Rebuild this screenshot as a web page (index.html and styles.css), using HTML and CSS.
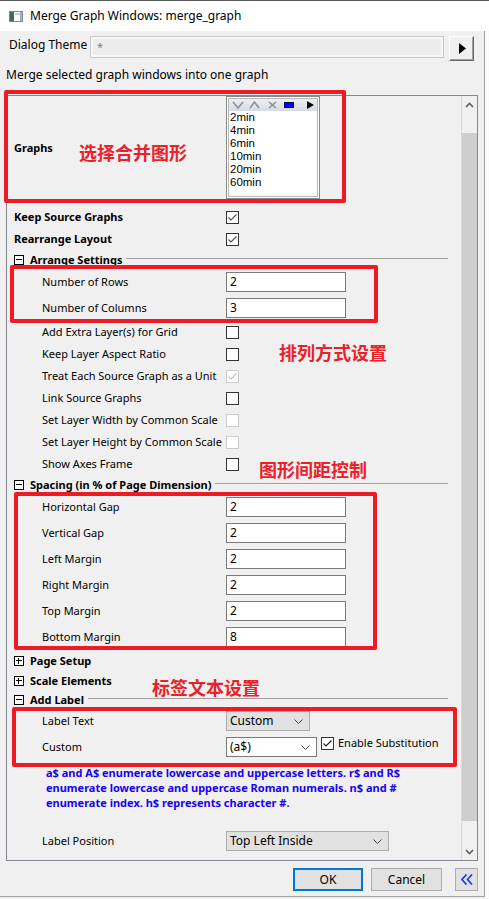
FILE: index.html
```html
<!DOCTYPE html>
<html>
<head>
<meta charset="utf-8">
<title>Merge Graph Windows</title>
<link rel="stylesheet" href="styles.css">
</head>
<body>
<div class="titlebar">
  <svg class="app-icon" width="14" height="11" viewBox="0 0 14 11">
    <rect x="0.5" y="0.5" width="13" height="10" fill="#fff" stroke="#7d8a8a"/>
    <rect x="1" y="1" width="4" height="9" fill="#3f6b66"/>
    <rect x="6" y="2" width="5" height="2" fill="#c9d3d3"/>
    <rect x="11" y="1" width="2" height="9" fill="#a8b2b2"/>
  </svg>
  <span class="title">Merge Graph Windows: merge_graph</span>
</div>
<div class="frame">
  <div class="dialog">
    <div class="theme-row">
      <span class="theme-label">Dialog Theme</span>
      <div class="theme-box">*</div>
      <div class="theme-btn">
        <svg width="7" height="11" viewBox="0 0 7 11"><polygon points="0,0 7,5.5 0,11" fill="#000"/></svg>
      </div>
    </div>
    <div class="desc">Merge selected graph windows into one graph</div>
    <div class="panel">
      <div class="tree">
        <div class="row graphs">
          <div class="lbl b">Graphs</div>
          <div class="listbox">
            <div class="lb-tools">
              <svg width="90" height="12" viewBox="0 0 90 12">
                <polyline points="4,3 9,9 14,3" fill="none" stroke="#8b9099" stroke-width="1.6"/>
                <polyline points="21,9 25.5,3 30,9" fill="none" stroke="#8b9099" stroke-width="1.6"/>
                <path d="M40,3 L47,9 M47,3 L40,9" stroke="#8b9099" stroke-width="1.6"/>
                <rect x="55.5" y="3.5" width="9" height="5" fill="#0000ff" stroke="#00006a"/>
                <polygon points="78,2 85,6 78,10" fill="#000"/>
              </svg>
            </div>
            <div class="lb-item">2min</div>
            <div class="lb-item">4min</div>
            <div class="lb-item">6min</div>
            <div class="lb-item">10min</div>
            <div class="lb-item">20min</div>
            <div class="lb-item">60min</div>
          </div>
        </div>
        <div class="spacer7"></div>
        <div class="row">
          <div class="lbl b">Keep Source Graphs</div>
          <div class="cb"><svg width="11" height="11" viewBox="0 0 11 11"><polyline points="1.5,5.5 4,8 9.5,2.5" fill="none" stroke="#555" stroke-width="1.2"/></svg></div>
        </div>
        <div class="row">
          <div class="lbl b">Rearrange Layout</div>
          <div class="cb"><svg width="11" height="11" viewBox="0 0 11 11"><polyline points="1.5,5.5 4,8 9.5,2.5" fill="none" stroke="#555" stroke-width="1.2"/></svg></div>
        </div>
        <div class="hdr">
          <span class="exp"><span class="bar-h"></span></span>
          <span class="htext">Arrange Settings</span>
          <span class="hline"></span>
        </div>
        <div class="row r26">
          <div class="lbl sub">Number of Rows</div>
          <div class="num">2</div>
        </div>
        <div class="row r26">
          <div class="lbl sub">Number of Columns</div>
          <div class="num">3</div>
        </div>
        <div class="row">
          <div class="lbl sub">Add Extra Layer(s) for Grid</div>
          <div class="cb"></div>
        </div>
        <div class="row">
          <div class="lbl sub">Keep Layer Aspect Ratio</div>
          <div class="cb"></div>
        </div>
        <div class="row">
          <div class="lbl sub">Treat Each Source Graph as a Unit</div>
          <div class="cb dis"><svg width="11" height="11" viewBox="0 0 11 11"><polyline points="1.5,5.5 4,8 9.5,2.5" fill="none" stroke="#c4c4c4" stroke-width="1.2"/></svg></div>
        </div>
        <div class="row">
          <div class="lbl sub">Link Source Graphs</div>
          <div class="cb"></div>
        </div>
        <div class="row">
          <div class="lbl sub">Set Layer Width by Common Scale</div>
          <div class="cb dis"></div>
        </div>
        <div class="row">
          <div class="lbl sub">Set Layer Height by Common Scale</div>
          <div class="cb dis"></div>
        </div>
        <div class="row">
          <div class="lbl sub">Show Axes Frame</div>
          <div class="cb"></div>
        </div>
        <div class="hdr">
          <span class="exp"><span class="bar-h"></span></span>
          <span class="htext">Spacing (in % of Page Dimension)</span>
          <span class="hline"></span>
        </div>
        <div class="row r26"><div class="lbl sub">Horizontal Gap</div><div class="num">2</div></div>
        <div class="row r26"><div class="lbl sub">Vertical Gap</div><div class="num">2</div></div>
        <div class="row r26"><div class="lbl sub">Left Margin</div><div class="num">2</div></div>
        <div class="row r26"><div class="lbl sub">Right Margin</div><div class="num">2</div></div>
        <div class="row r26"><div class="lbl sub">Top Margin</div><div class="num">2</div></div>
        <div class="row r26"><div class="lbl sub">Bottom Margin</div><div class="num">8</div></div>
        <div class="hdr h21">
          <span class="exp"><span class="bar-h"></span><span class="bar-v"></span></span>
          <span class="htext">Page Setup</span>
        </div>
        <div class="hdr">
          <span class="exp"><span class="bar-h"></span><span class="bar-v"></span></span>
          <span class="htext">Scale Elements</span>
        </div>
        <div class="hdr">
          <span class="exp"><span class="bar-h"></span></span>
          <span class="htext">Add Label</span>
          <span class="hline"></span>
        </div>
        <div class="row r24">
          <div class="lbl sub">Label Text</div>
          <div class="combo gray w84"><span>Custom</span><svg width="9" height="5" viewBox="0 0 9 5"><polyline points="0.5,0.5 4.5,4.5 8.5,0.5" fill="none" stroke="#444"/></svg></div>
        </div>
        <div class="row r28">
          <div class="lbl sub">Custom</div>
          <div class="combo white w91"><span>(a$)</span><svg width="9" height="5" viewBox="0 0 9 5"><polyline points="0.5,0.5 4.5,4.5 8.5,0.5" fill="none" stroke="#444"/></svg></div>
          <div class="cb top"><svg width="11" height="11" viewBox="0 0 11 11"><polyline points="1.5,5.5 4,8 9.5,2.5" fill="none" stroke="#222" stroke-width="1.2"/></svg></div>
          <span class="cbtext">Enable Substitution</span>
        </div>
        <div class="note">a$ and A$ enumerate lowercase and uppercase letters. r$ and R$<br>enumerate lowercase and uppercase Roman numerals. n$ and #<br>enumerate index. h$ represents character #.</div>
        <div class="row lastrow">
          <div class="lbl sub">Label Position</div>
          <div class="combo gray w163"><span>Top Left Inside</span><svg width="9" height="5" viewBox="0 0 9 5"><polyline points="0.5,0.5 4.5,4.5 8.5,0.5" fill="none" stroke="#444"/></svg></div>
        </div>
      </div>
      <div class="vscroll">
        <div class="sc-arrow">
          <svg width="9" height="6" viewBox="0 0 9 6"><polyline points="1,5 4.5,1.5 8,5" fill="none" stroke="#606060" stroke-width="1.6"/></svg>
        </div>
        <div class="sc-track"><div class="sc-thumb"></div></div>
        <div class="sc-arrow">
          <svg width="9" height="6" viewBox="0 0 9 6"><polyline points="1,1 4.5,4.5 8,1" fill="none" stroke="#606060" stroke-width="1.6"/></svg>
        </div>
      </div>
    </div>
    <div class="footer">
      <div class="btn ok">OK</div>
      <div class="btn cancel">Cancel</div>
      <div class="btn more">
        <svg width="12" height="11" viewBox="0 0 12 11"><polyline points="5.5,0.5 1,5.5 5.5,10.5" fill="none" stroke="#1d3cf0" stroke-width="1.8"/><polyline points="11,0.5 6.5,5.5 11,10.5" fill="none" stroke="#1d3cf0" stroke-width="1.8"/></svg>
      </div>
    </div>
  </div>
  <div class="side"></div>
</div>

<div class="mark m1"></div>
<div class="mark m2"></div>
<div class="mark m3"></div>
<div class="mark m4"></div>
<div class="note-cn n1">选择合并图形</div>
<div class="note-cn n2">排列方式设置</div>
<div class="note-cn n3">图形间距控制</div>
<div class="note-cn n4">标签文本设置</div>
</body>
</html>
```
FILE: styles.css
```css
html, body {
  margin: 0;
  padding: 0;
}
body {
  width: 489px;
  height: 899px;
  overflow: hidden;
  background: #f0f0f0;
  font-family: "Noto Sans", "DejaVu Sans", sans-serif;
  color: #000;
  position: relative;
}

/* title bar */
.titlebar {
  height: 30px;
  border-top: 1px solid #5a5a5a;
  background: #fff;
  display: flex;
  align-items: center;
  padding-left: 9px;
}
.app-icon { display: block; }
.title {
  margin-left: 7px;
  font-size: 12px;
  line-height: 16px;
}

.frame {
  display: flex;
  height: 868px;
}
.dialog {
  width: 485px;
  height: 866px;
  box-sizing: border-box;
  border-right: 1px solid #a0a0a0;
  border-bottom: 1px solid #a0a0a0;
  flex: none;
}
.side {
  flex: 1;
  background: #fafafa;
}

/* dialog theme row */
.theme-row {
  display: flex;
  align-items: flex-start;
  height: 33px;
  box-sizing: border-box;
  padding: 5px 0 0 9px;
}
.theme-label {
  width: 81px;
  font-size: 12px;
  line-height: 18px;
}
.theme-box {
  width: 354px;
  height: 22px;
  box-sizing: border-box;
  border: 1px solid #c8c8c8;
  box-shadow: inset 0 0 0 2px #f7f7f7;
  background: #ececec;
  color: #808080;
  font-size: 11px;
  line-height: 20px;
  padding-left: 6px;
}
.theme-btn {
  margin-left: 5px;
  width: 25px;
  height: 25px;
  box-sizing: border-box;
  border: 1px solid;
  border-color: #fff #696969 #696969 #fff;
  box-shadow: inset -1px -1px 0 #a0a0a0;
  background: #f0f0f0;
  display: flex;
  align-items: center;
  justify-content: center;
}
.theme-btn svg { display: block; margin-left: 1px; }

.desc {
  height: 22px;
  line-height: 22px;
  font-size: 12px;
  padding-left: 6px;
  margin-bottom: 9px;
}

/* tree panel */
.panel {
  margin-left: 6px;
  width: 472px;
  height: 766px;
  box-sizing: border-box;
  border: 1px solid #828790;
  display: flex;
  overflow: hidden;
}
.tree {
  width: 454px;
  flex: none;
  font-size: 11px;
  overflow: hidden;
}
.row {
  display: flex;
  align-items: center;
  height: 22px;
}
.row.r26 { height: 26px; }
.row.r24 { height: 24px; }
.row.r28 { height: 28px; }
.row.graphs { height: 103px; }
.row.lastrow { height: 56px; }
.spacer7 { height: 7px; }

.lbl {
  width: 219px;
  flex: none;
  box-sizing: border-box;
  padding-left: 7px;
  line-height: 14px;
  white-space: nowrap;
}
.lbl.sub { padding-left: 35px; }
.b { font-weight: bold; }

/* list box */
.listbox {
  width: 94px;
  height: 103px;
  box-sizing: border-box;
  border: 1px solid #8a8a8a;
  box-shadow: inset 0 0 0 1px #fff, inset 0 0 0 2px #b9b9b9;
  background: #fff;
  padding: 2px;
  align-self: flex-start;
}
.lb-tools {
  height: 12px;
  background: linear-gradient(#eceef2, #d6dae1);
}
.lb-tools svg { display: block; }
.lb-item {
  height: 13px;
  line-height: 13px;
  padding-left: 1px;
  font-family: "Liberation Sans", "DejaVu Sans", sans-serif;
  font-size: 11.5px;
}

/* checkbox */
.cb {
  width: 13px;
  height: 13px;
  box-sizing: border-box;
  border: 1px solid #333;
  background: #fff;
  flex: none;
}
.cb svg { display: block; }
.cb.dis { border-color: #cccccc; }
.cb.top {
  align-self: flex-start;
  margin-top: 4px;
  margin-left: 4px;
}
.cbtext {
  align-self: flex-start;
  margin-top: 3px;
  margin-left: 4px;
  line-height: 14px;
  white-space: nowrap;
}

/* headers */
.hdr {
  display: flex;
  align-items: center;
  height: 19px;
  padding-left: 7px;
}
.hdr.h21 { height: 21px; }
.exp {
  width: 10px;
  height: 10px;
  box-sizing: border-box;
  border: 1px solid #000;
  position: relative;
  flex: none;
  background: #fff;
}
.bar-h {
  position: absolute;
  left: 1px;
  top: 3px;
  width: 6px;
  height: 1px;
  background: #000;
}
.bar-v {
  position: absolute;
  left: 3px;
  top: 1px;
  width: 1px;
  height: 6px;
  background: #000;
}
.htext {
  margin-left: 6px;
  font-weight: bold;
  line-height: 14px;
  white-space: nowrap;
}
.hline {
  flex: 1;
  height: 0;
  border-top: 1px solid #a0a0a0;
  margin: -2px 13px 0 4px;
}

/* inputs */
.num {
  width: 120px;
  height: 20px;
  box-sizing: border-box;
  border: 1px solid #7a7a7a;
  background: #fff;
  font-size: 12px;
  line-height: 18px;
  padding-left: 3px;
}
.combo {
  height: 20px;
  box-sizing: border-box;
  border: 1px solid #adadad;
  display: flex;
  align-items: center;
  justify-content: space-between;
  padding: 0 6px 0 3px;
  font-size: 12px;
  flex: none;
}
.combo span { line-height: 18px; }
.combo svg { display: block; }
.combo.gray { background: #e1e1e1; }
.combo.white { background: #fff; border-color: #7a7a7a; }
.w84 { width: 84px; }
.w91 { width: 91px; }
.w163 { width: 163px; }

.note {
  padding: 4px 0 0 39px;
  height: 48px;
  font-size: 11px;
  font-weight: bold;
  line-height: 15px;
  color: #1a00f5;
  white-space: nowrap;
}

/* scrollbar */
.vscroll {
  width: 16px;
  flex: none;
  box-sizing: border-box;
  border-left: 1px solid #dadada;
  display: flex;
  flex-direction: column;
}
.sc-arrow {
  height: 17px;
  display: flex;
  align-items: center;
  justify-content: center;
}
.sc-arrow svg { display: block; }
.sc-track {
  flex: 1;
  padding-top: 20px;
}
.sc-thumb {
  height: 688px;
  background: #cdcdcd;
}

/* footer */
.footer {
  display: flex;
  justify-content: flex-end;
  padding: 7px 6px 0 0;
}
.btn {
  height: 23px;
  box-sizing: border-box;
  border: 1px solid #adadad;
  background: #e1e1e1;
  display: flex;
  align-items: center;
  justify-content: center;
  font-size: 12px;
}
.btn.ok {
  width: 70px;
  border: 2px solid #0078d7;
}
.btn.cancel {
  width: 71px;
  margin-left: 8px;
}
.btn.more {
  width: 23px;
  margin-left: 13px;
}
.btn.more svg { display: block; }

/* red annotations drawn over the screenshot */
.mark {
  position: absolute;
  border: 4px solid #ed1c24;
  border-radius: 2px;
  box-sizing: border-box;
}
.m1 { left: 4px; top: 90px; width: 342px; height: 113px; }
.m2 { left: 10px; top: 265px; width: 368px; height: 58px; }
.m3 { left: 14px; top: 492px; width: 363px; height: 158px; }
.m4 { left: 12px; top: 707px; width: 445px; height: 60px; }

.note-cn {
  position: absolute;
  font-family: "Noto Sans CJK SC", sans-serif;
  font-weight: bold;
  font-size: 18px;
  line-height: 18px;
  color: #ea2129;
  white-space: nowrap;
}
.n1 { left: 79px; top: 143px; }
.n2 { left: 279px; top: 343px; }
.n3 { left: 259px; top: 460px; }
.n4 { left: 152px; top: 678px; }
```
